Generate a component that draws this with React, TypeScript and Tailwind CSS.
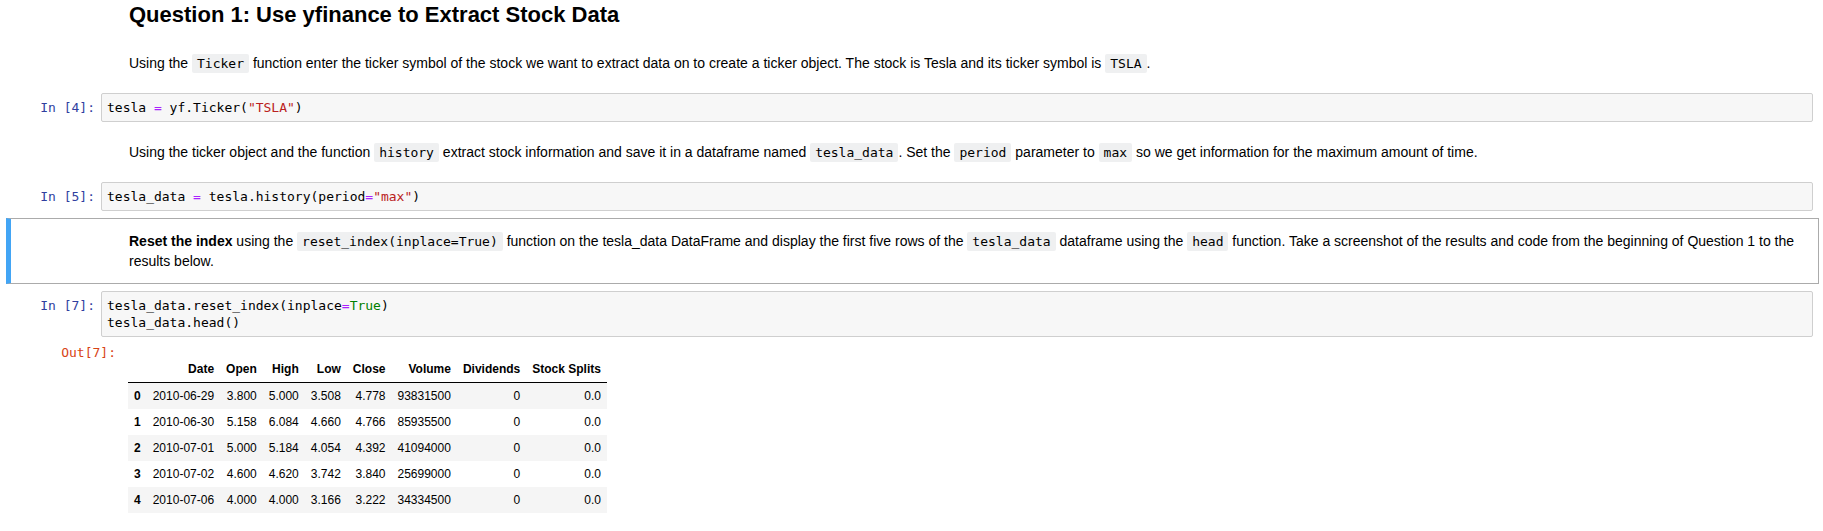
const mono = "font-['DejaVu_Sans_Mono',monospace] text-[13px]";

function Code({ children }: { children: React.ReactNode }) {
  return (
    <code className={`${mono} leading-[14px] bg-[#eff0f1] px-[5px] py-[2px] rounded-[2px] text-black`}>{children}</code>
  );
}

function CodeCell({ n, lines }: { n: number; lines: React.ReactNode[] }) {
  return (
    <div className="flex">
      <div className={`w-[95px] shrink-0 pr-[6px] pt-[6px] text-right leading-[17px] text-[#303f9f] ${mono}`}>
        In&nbsp;[{n}]:
      </div>
      <div className="flex-1 mr-[6px] border border-[#cfcfcf] rounded-[2px] bg-[#f7f7f7] px-[5px] py-[5px]">
        {lines.map((l, i) => (
          <div key={i} className={`${mono} leading-[17px] text-black whitespace-pre`}>{l}</div>
        ))}
      </div>
    </div>
  );
}

const op = "text-[#aa22ff]";

const ROWS = [
  ["0", "2010-06-29", "3.800", "5.000", "3.508", "4.778", "93831500", "0", "0.0"],
  ["1", "2010-06-30", "5.158", "6.084", "4.660", "4.766", "85935500", "0", "0.0"],
  ["2", "2010-07-01", "5.000", "5.184", "4.054", "4.392", "41094000", "0", "0.0"],
  ["3", "2010-07-02", "4.600", "4.620", "3.742", "3.840", "25699000", "0", "0.0"],
  ["4", "2010-07-06", "4.000", "4.000", "3.166", "3.222", "34334500", "0", "0.0"],
];

const HEAD = ["", "Date", "Open", "High", "Low", "Close", "Volume", "Dividends", "Stock Splits"];

export default function App() {
  return (
    <div className="w-[1823px] h-[531px] overflow-hidden bg-white pl-[6px] pr-[4px] font-['Liberation_Sans',Arial,sans-serif] text-black">
      {/* heading */}
      <div className="pl-[123px]">
        <h2 className="text-[22px] font-bold leading-[30px]">Question 1: Use yfinance to Extract Stock Data</h2>
      </div>

      <p className="pl-[123px] mt-[23px] text-[14px] leading-[20px]">
        Using the <Code>Ticker</Code> function enter the ticker symbol of the stock we want to extract data on to create a
        ticker object. The stock is Tesla and its ticker symbol is <Code>TSLA</Code>.
      </p>

      <div className="mt-[20px]">
        <CodeCell
          n={4}
          lines={[
            <>
              tesla <span className={op}>=</span> yf.Ticker(<span className="text-[#ba2121]">"TSLA"</span>)
            </>,
          ]}
        />
      </div>

      <p className="pl-[123px] mt-[20px] text-[14px] leading-[20px]">
        Using the ticker object and the function <Code>history</Code> extract stock information and save it in a
        dataframe named <Code>tesla_data</Code>. Set the <Code>period</Code> parameter to <Code>max</Code> so we get
        information for the maximum amount of time.
      </p>

      <div className="mt-[20px]">
        <CodeCell
          n={5}
          lines={[
            <>
              tesla_data <span className={op}>=</span> tesla.history(period<span className={op}>=</span>
              <span className="text-[#ba2121]">"max"</span>)
            </>,
          ]}
        />
      </div>

      {/* selected markdown cell */}
      <div className="mt-[7px] border border-[#ababab] border-l-[5px] border-l-[#42a5f5] pl-[118px] pr-[20px] pt-[12px] pb-[12px] text-[14px] leading-[20px]">
        <b>Reset the index</b> using the <Code>reset_index(inplace=True)</Code> function on the tesla_data DataFrame
        and display the first five rows of the <Code>tesla_data</Code> dataframe using the <Code>head</Code> function.
        Take a screenshot of the results and code from the beginning of Question 1 to the
        <br />
        results below.
      </div>

      <div className="mt-[7px]">
        <CodeCell
          n={7}
          lines={[
            <>
              tesla_data.reset_index(inplace<span className={op}>=</span>
              <span className="text-[#008000]">True</span>)
            </>,
            <>tesla_data.head()</>,
          ]}
        />
      </div>

      {/* output */}
      <div className="mt-[7px] flex">
        <div className={`w-[116px] shrink-0 pr-[6px] text-right leading-[17px] text-[#d84315] ${mono}`}>Out[7]:</div>
        <div className="pl-[6px] pt-[12px]">
          <table className="border-collapse text-[12px] leading-[14px]">
            <thead>
              <tr className="border-b border-black">
                {HEAD.map((h, i) => (
                  <th key={i} className="px-[6px] py-[6px] text-right font-bold whitespace-nowrap">
                    {h}
                  </th>
                ))}
              </tr>
            </thead>
            <tbody>
              {ROWS.map((r, i) => (
                <tr key={i} className={i % 2 === 0 ? "bg-[#f5f5f5]" : "bg-white"}>
                  {r.map((c, j) =>
                    j === 0 ? (
                      <th key={j} className="px-[6px] py-[6px] text-right font-bold">
                        {c}
                      </th>
                    ) : (
                      <td key={j} className="px-[6px] py-[6px] text-right whitespace-nowrap">
                        {c}
                      </td>
                    )
                  )}
                </tr>
              ))}
            </tbody>
          </table>
        </div>
      </div>
    </div>
  );
}
